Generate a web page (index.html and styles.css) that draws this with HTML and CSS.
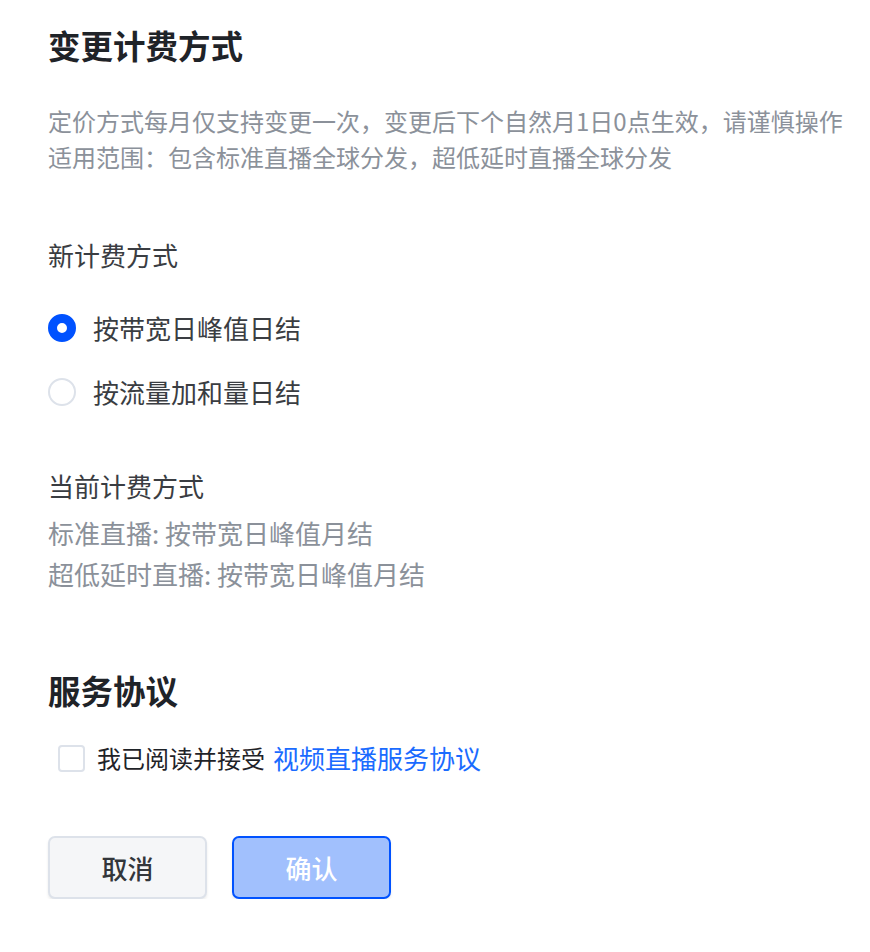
FILE: index.html
```html
<!DOCTYPE html>
<html lang="zh-CN">
<head>
<meta charset="utf-8">
<title>变更计费方式</title>
<link rel="stylesheet" href="styles.css">
</head>
<body>
<div class="page">
  <h1 class="title">变更计费方式</h1>
  <div class="desc">
    <p>定价方式每月仅支持变更一次，变更后下个自然月1日0点生效，请谨慎操作</p>
    <p>适用范围：包含标准直播全球分发，超低延时直播全球分发</p>
  </div>

  <div class="label new-label">新计费方式</div>
  <div class="radios">
    <div class="radio-row">
      <span class="radio checked"></span>
      <span class="radio-text">按带宽日峰值日结</span>
    </div>
    <div class="radio-row second">
      <span class="radio"></span>
      <span class="radio-text">按流量加和量日结</span>
    </div>
  </div>

  <div class="label current-label">当前计费方式</div>
  <div class="current">
    <p>标准直播: 按带宽日峰值月结</p>
    <p>超低延时直播: 按带宽日峰值月结</p>
  </div>

  <h2 class="title section">服务协议</h2>
  <div class="agree">
    <span class="checkbox"></span>
    <span class="agree-text">我已阅读并接受</span>
    <a class="agree-link">视频直播服务协议</a>
  </div>

  <div class="actions">
    <button class="btn btn-cancel">取消</button>
    <button class="btn btn-confirm">确认</button>
  </div>
</div>
</body>
</html>
```

FILE: styles.css
```css
html, body {
  margin: 0;
  padding: 0;
  background: #ffffff;
}

body {
  font-family: "Noto Sans CJK SC", "Noto Sans", sans-serif;
  color: #333333;
}

.page {
  padding: 23px 0 0 48px;
}

p {
  margin: 0;
}

.title {
  margin: 0;
  font-size: 32.5px;
  line-height: 44px;
  font-weight: 600;
  color: #1f2328;
}

.desc {
  margin-top: 36px;
  font-size: 24px;
  line-height: 36px;
  color: #8b919a;
}

.label {
  font-size: 26px;
  line-height: 40px;
  color: #3a3d42;
}

.new-label {
  margin-top: 60px;
}

.radios {
  margin-top: 31px;
  display: flex;
  flex-direction: column;
  gap: 20px;
}

.radio-row {
  display: flex;
  align-items: center;
  height: 44px;
  gap: 17px;
}

.radio {
  box-sizing: border-box;
  width: 28px;
  height: 28px;
  border-radius: 50%;
  border: 2px solid #dde2ea;
  background: #fff;
  flex: none;
}

.radio.checked {
  border: 9px solid #0052ff;
  background: #fff;
}

.radio-text {
  font-size: 26px;
  line-height: 44px;
  color: #3a3d42;
}

.current-label {
  margin-top: 52px;
}

.current {
  margin-top: 6px;
  font-size: 26px;
  line-height: 41px;
  color: #8b919a;
}

.section {
  margin-top: 74px;
}

.agree {
  margin-top: 26px;
  height: 40px;
  display: flex;
  align-items: center;
  padding-left: 10px;
}

.checkbox {
  box-sizing: border-box;
  width: 27px;
  height: 27px;
  border: 2px solid #dde2ea;
  border-radius: 4px;
  background: #fff;
  flex: none;
  margin-right: 12px;
}

.agree-text {
  font-size: 24px;
  line-height: 40px;
  color: #1f2328;
}

.agree-link {
  margin-left: 8px;
  font-size: 26px;
  line-height: 40px;
  color: #1a6bff;
  text-decoration: none;
}

.actions {
  margin-top: 58px;
  display: flex;
  gap: 25px;
}

.btn {
  box-sizing: border-box;
  width: 159px;
  height: 63px;
  border-radius: 7px;
  font-family: "Noto Sans CJK SC", "Noto Sans", sans-serif;
  font-size: 26px;
  font-weight: 500;
  box-shadow: 0 2px 3px rgba(0, 0, 0, 0.08);
  padding: 0;
}

.btn-cancel {
  background: #f5f6f8;
  border: 2px solid #dde2ea;
  color: #33363b;
}

.btn-confirm {
  background: #a1c0fd;
  border: 2px solid #0052ff;
  color: #ffffff;
}
```
